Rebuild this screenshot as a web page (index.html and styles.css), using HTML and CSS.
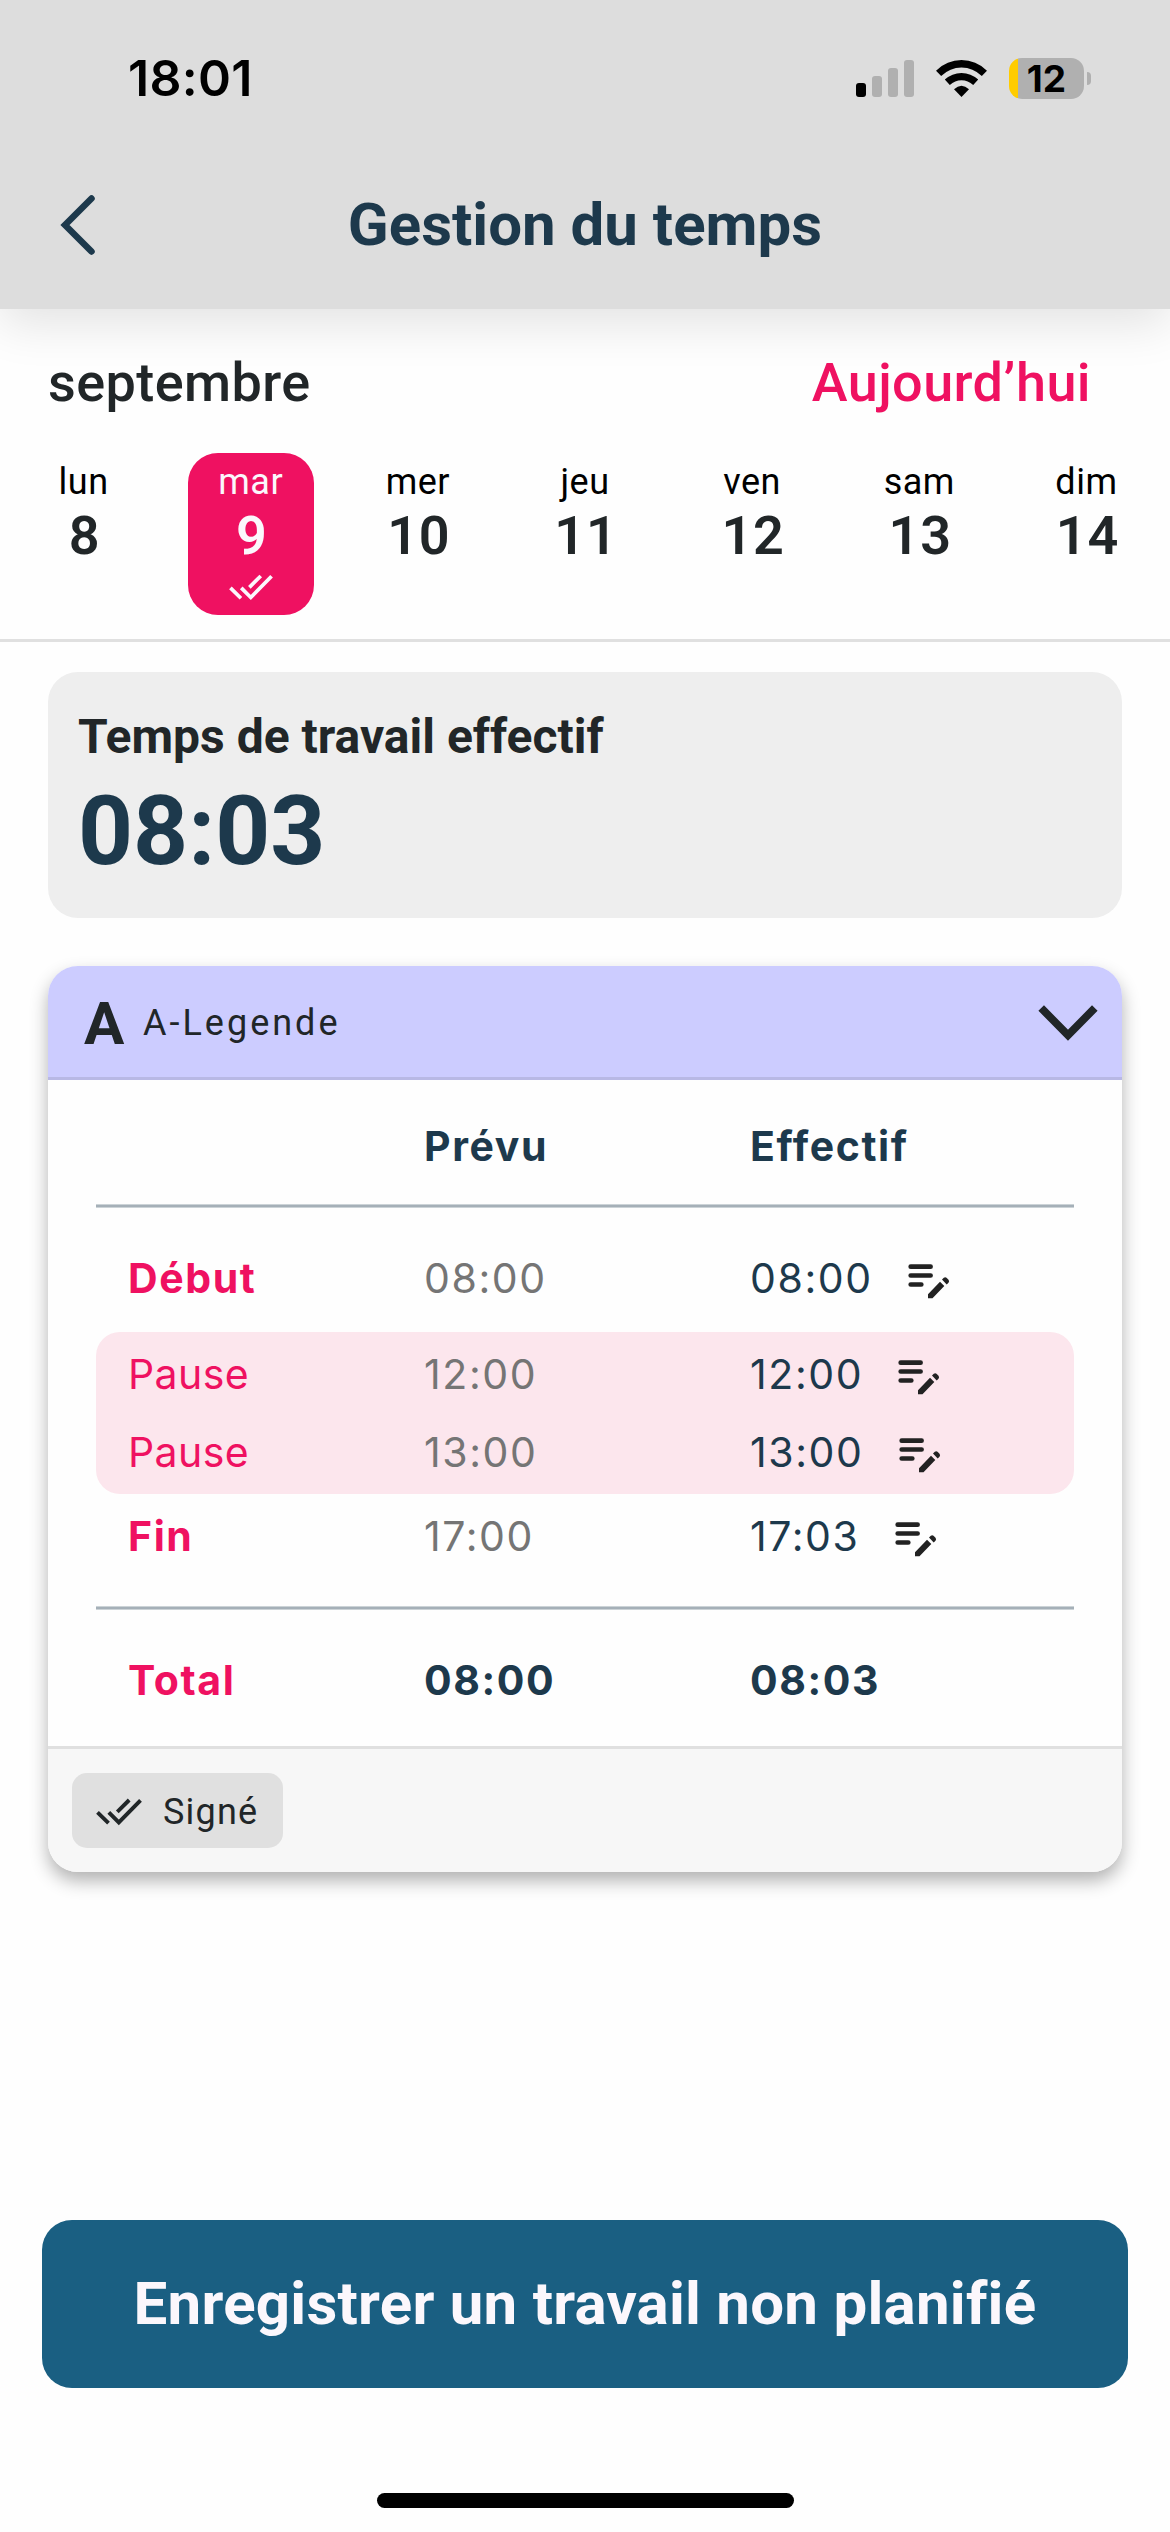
FILE: index.html
```html
<!DOCTYPE html>
<html lang="fr">
<head>
<meta charset="utf-8">
<title>Gestion du temps</title>
<link rel="stylesheet" href="styles.css">
</head>
<body>
<svg class="defs" width="0" height="0" aria-hidden="true">
  <symbol id="edit" viewBox="0 0 43 36">
    <g fill="none" stroke="#222" stroke-width="4.700" stroke-linecap="round"><path d="M3.700 3.700H23.600M3.700 12.500H23.600M3.700 21.500H14.300"/></g>
    <path fill="#222" d="M21 35.300V31.200L33 18.700L37.300 23L25.500 35.300ZM35 16.500L36.800 14.800Q38.300 13.700 39.500 14.800L41.500 16.700Q42.700 18 41.500 19.700L39.700 21.500Z"/>
  </symbol>
  <symbol id="checks" viewBox="0 0 46 28">
    <g fill="none" stroke="currentColor" stroke-width="3.9"><path d="M1.500 14.400L12.500 25.200M12.800 14.400L22.800 24.400L44.500 2.300M21.300 13.800L33.200 2"/></g>
  </symbol>
</svg>
<div class="screen">
  <header class="top">
    <div class="status">
      <span class="clock">18:01</span>
      <div class="status-icons">
        <svg class="signal" width="58" height="37" viewBox="0 0 58 37"><rect x="0" y="23" width="10" height="14" rx="3"/><g fill="#b0b0b0"><rect x="16" y="16" width="10" height="21" rx="3"/><rect x="32" y="8" width="10" height="29" rx="3"/><rect x="48" y="0" width="10" height="37" rx="3"/></g></svg>
        <svg class="wifi" width="51" height="37" viewBox="0 0 51 37"><path d="M25.500 37L18 29.300Q25.500 22 33 29.300Z"/><g fill="none" stroke="#000" stroke-width="7.400"><path d="M2.600 13.300Q12.500 3.700 25.500 3.700T48.400 13.300"/><path d="M11.300 22.300Q17.500 16.600 25.500 16.600T39.700 22.300"/></g></svg>
        <div class="battery"><span class="level">12</span></div><i class="nub"></i>
      </div>
    </div>
    <div class="titlebar">
      <svg class="back" width="36" height="62" viewBox="0 0 36 62"><path d="M31.500 4.500L5 31L31.500 57.500" fill="none" stroke="#1d394c" stroke-width="6.500" stroke-linecap="round"/></svg>
      <h1>Gestion du temps</h1>
    </div>
  </header>
  <section class="calendar">
    <div class="month"><span>septembre</span><a class="today">Aujourd’hui</a></div>
    <div class="days">
      <div class="day"><span>lun</span><b>8</b></div>
      <div class="day selected"><span>mar</span><b>9</b><svg width="44" height="27"><use href="#checks"/></svg></div>
      <div class="day"><span>mer</span><b>10</b></div>
      <div class="day"><span>jeu</span><b>11</b></div>
      <div class="day"><span>ven</span><b>12</b></div>
      <div class="day"><span>sam</span><b>13</b></div>
      <div class="day"><span>dim</span><b>14</b></div>
    </div>
  </section>
  <section class="summary">
    <h2>Temps de travail effectif</h2>
    <div class="total-time">08:03</div>
  </section>
  <section class="shift">
    <div class="shift-head">
      <b>A</b><span>A-Legende</span>
      <svg width="60" height="36" viewBox="0 0 60 36"><path d="M3.200 3L30 30.300L56.800 3" fill="none" stroke="#212628" stroke-width="7.800"/></svg>
    </div>
    <div class="times">
      <div class="row head"><span></span><span>Prévu</span><span>Effectif</span></div>
      <div class="rule"></div>
      <div class="row start"><strong>Début</strong><span class="planned">08:00</span><span class="actual">08:00<svg class="edit"><use href="#edit"/></svg></span></div>
      <div class="pauses">
        <div class="row"><em>Pause</em><span class="planned">12:00</span><span class="actual">12:00<svg class="edit"><use href="#edit"/></svg></span></div>
        <div class="row"><em>Pause</em><span class="planned">13:00</span><span class="actual">13:00<svg class="edit"><use href="#edit"/></svg></span></div>
      </div>
      <div class="row end"><strong>Fin</strong><span class="planned">17:00</span><span class="actual">17:03<svg class="edit"><use href="#edit"/></svg></span></div>
      <div class="rule"></div>
      <div class="row sum"><strong>Total</strong><span>08:00</span><span>08:03</span></div>
    </div>
    <div class="shift-foot"><span class="chip"><svg width="46" height="28"><use href="#checks"/></svg>Signé</span></div>
  </section>
  <button class="primary">Enregistrer un travail non planifié</button>
  <div class="home"></div>
</div>
</body>
</html>
```
FILE: styles.css
```css
* { box-sizing: border-box; }
body { margin: 0; background: #fefefe; font-family: Roboto, sans-serif; color: #212628; }
.defs { position: absolute; }
svg { display: block; flex: none; }
.screen { width: 1170px; height: 2532px; overflow: hidden; display: flex; flex-direction: column; }
h1, h2 { margin: 0; }

.top { height: 309px; flex: none; background: #ddd; box-shadow: 0 15px 45px rgba(0, 0, 0, .11); }
.status { height: 156px; padding: 0 79px 0 128px; display: flex; align-items: center; justify-content: space-between; }
.clock { font: 600 50px/60px Inter, sans-serif; color: #000; letter-spacing: .3px; }
.status-icons { display: flex; align-items: center; }
.wifi { margin: 0 22px; }
.battery { width: 75px; height: 41px; border-radius: 13px; background: linear-gradient(90deg, #fc0 9px, #b0b0b0 9px); display: flex; align-items: center; justify-content: center; }
.level { font: 700 37px/41px Inter, sans-serif; color: #000; }
.nub { width: 4px; height: 13px; margin-left: 3px; border-radius: 0 4px 4px 0; background: #b0b0b0; }
.titlebar { height: 138px; padding: 0 60px; display: grid; grid-template-columns: 36px 1fr 36px; align-items: center; }
h1 { font-size: 60px; line-height: 72px; font-weight: 700; color: #1d394c; text-align: center; }

.calendar { height: 333px; border-bottom: 3px solid #e0e0e0; }
.month { height: 144px; padding: 3px 79px 0 48px; display: flex; align-items: center; justify-content: space-between; font-size: 54px; font-weight: 500; letter-spacing: .4px; }
.today { color: #ef1161; }
.days { display: grid; grid-template-columns: repeat(7, 1fr); justify-items: center; }
.day { width: 126px; height: 162px; padding-top: 5px; border-radius: 30px; display: flex; flex-direction: column; align-items: center; }
.day span { font-size: 36px; line-height: 48px; font-weight: 450; color: #000; letter-spacing: .5px; }
.day b { font-size: 54px; line-height: 60px; font-weight: 650; padding-left: 2px; letter-spacing: .8px; }
.day svg { margin-top: 8px; }
.selected { background: #ef1161; }
.day.selected, .day.selected span { color: #fbf7fc; }

.summary { margin: 30px 48px 0; height: 246px; flex: none; padding: 36px 30px; border-radius: 30px; background: #eee; }
h2 { font-size: 48px; line-height: 58px; font-weight: 700; }
.total-time { margin-top: 9px; font-size: 96px; line-height: 112px; font-weight: 700; color: #1d394c; }

.shift { margin: 48px 48px 0; height: 906px; flex: none; border-radius: 30px; background: #fefefe; box-shadow: 0 9px 18px rgba(0, 0, 0, .3); display: flex; flex-direction: column; }
.shift-head { height: 114px; padding: 3px 24px 0 36px; border-radius: 30px 30px 0 0; background: #ccf; border-bottom: 3px solid #b8b8e5; display: flex; align-items: center; }
.shift-head b { font-size: 60px; font-weight: 700; width: 59px; }
.shift-head span { flex: 1; font-size: 36px; letter-spacing: 3px; }
.times { padding: 0 48px; height: 666px; font: 400 41px/50px Inter, sans-serif; letter-spacing: 1.6px; color: #1d394c; }
.row { display: grid; grid-template-columns: 296px 326px 1fr; height: 78px; padding-left: 32px; align-items: center; }
.row.head { height: 124px; padding-top: 8px; font-weight: 700; }
.rule { height: 4px; background: #a5b0b8; border: solid #ccd3d7; border-width: 1px 0; }
.row.start { height: 124px; padding-top: 16px; }
.row.end { height: 84px; margin-bottom: 28px; }
.row.sum { height: 136px; padding-top: 4px; font-weight: 700; }
.row strong { font-weight: 700; color: #ef1161; }
.row em { font-style: normal; letter-spacing: .4px; color: #ef1161; }
.planned { color: #757575; }
.actual { display: flex; align-items: center; }
.edit { width: 43px; height: 36px; margin: 6px 0 0 34px; }
.pauses { padding: 3px 0; border-radius: 24px; background: #fce6ed; }
.shift-foot { height: 126px; padding: 24px; border-top: 3px solid #e0e0e0; border-radius: 0 0 30px 30px; background: #f7f7f7; }
.chip { width: 211px; height: 75px; padding: 2px 24px 0; border-radius: 15px; background: #e0e0e0; display: flex; align-items: center; gap: 21px; font-size: 36px; letter-spacing: 1.2px; white-space: nowrap; }

.primary { margin: 348px 42px 0; height: 168px; flex: none; border: 0; border-radius: 30px; background: #1a5f82; color: #fbf7fc; font: 700 60px/72px Roboto, sans-serif; letter-spacing: .25px; }
.home { width: 417px; height: 15px; flex: none; margin: 105px auto 0; border-radius: 8px; background: #000; }
```
